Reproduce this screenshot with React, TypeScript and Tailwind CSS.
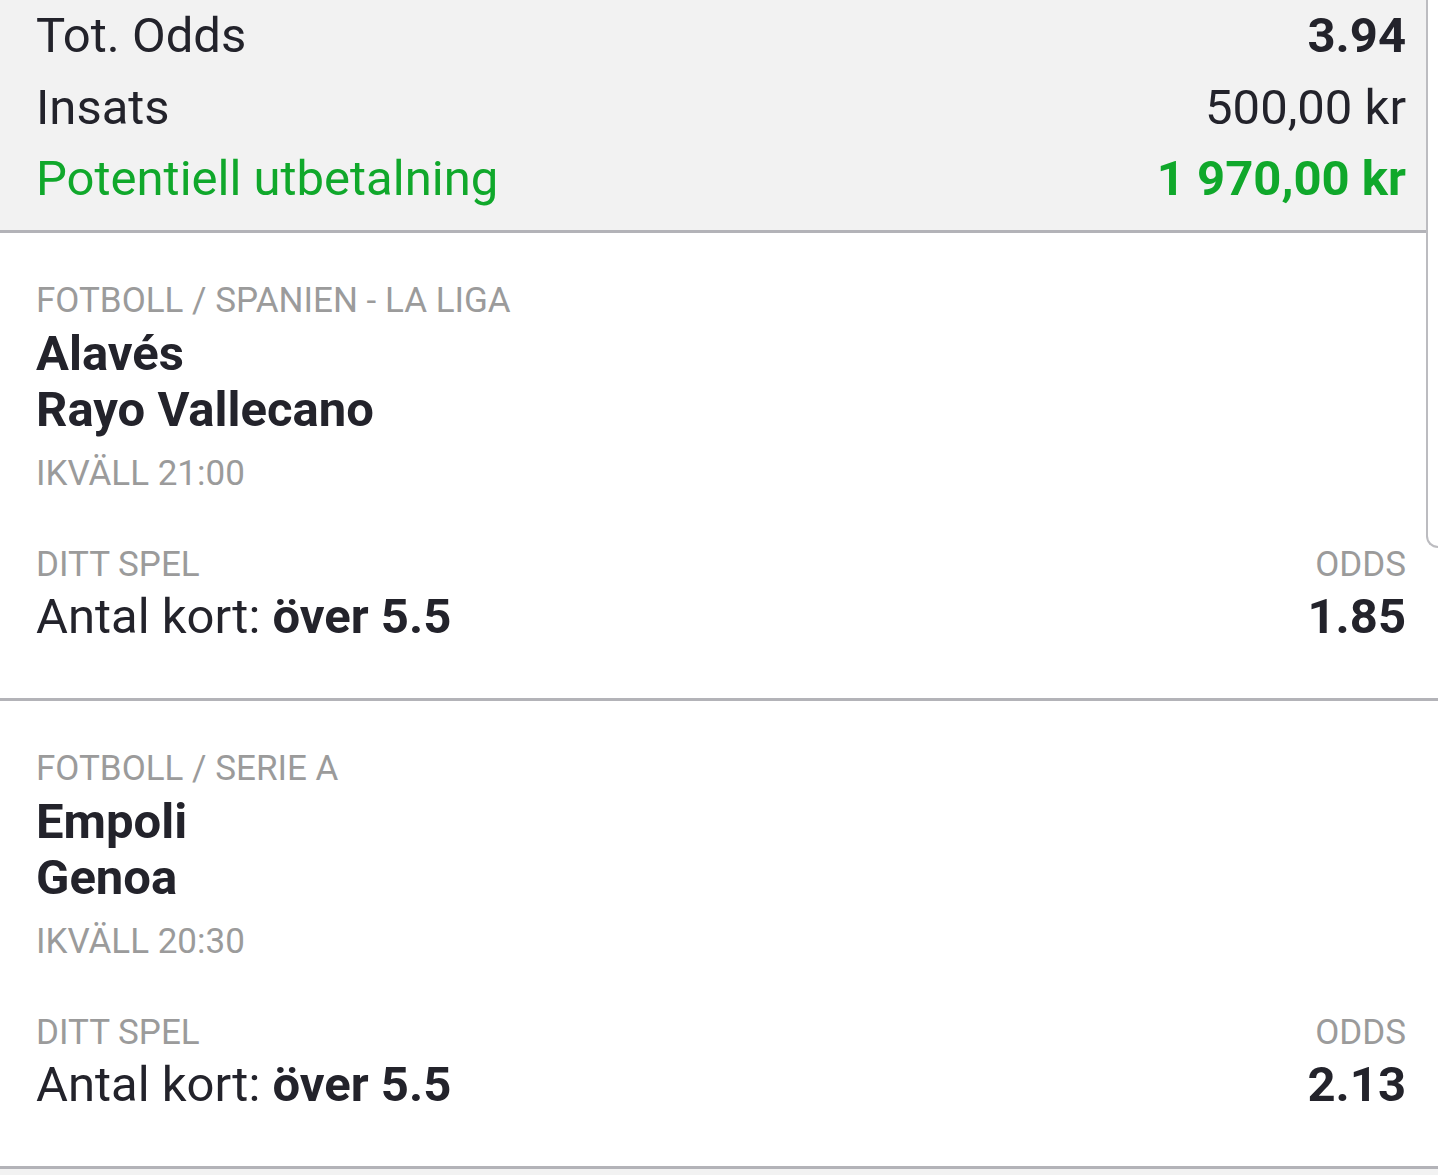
const summary = [
  { label: "Tot. Odds", value: "3.94", bold: true, green: false },
  { label: "Insats", value: "500,00 kr", bold: false, green: false },
  { label: "Potentiell utbetalning", value: "1 970,00 kr", bold: true, green: true },
];

const bets = [
  {
    league: "FOTBOLL / SPANIEN - LA LIGA",
    home: "Alavés",
    away: "Rayo Vallecano",
    time: "IKVÄLL 21:00",
    market: "Antal kort:",
    pick: "över 5.5",
    odds: "1.85",
  },
  {
    league: "FOTBOLL / SERIE A",
    home: "Empoli",
    away: "Genoa",
    time: "IKVÄLL 20:30",
    market: "Antal kort:",
    pick: "över 5.5",
    odds: "2.13",
  },
];

export default function App() {
  return (
    <div className="relative min-h-screen overflow-hidden bg-[#f2f2f2] text-[#23232b] font-['Roboto',sans-serif]">
      <div className="w-[1426px] border-b-[3px] border-[#b3b3b8] bg-[#f2f2f2] pb-[15.5px] pl-9 pr-5">
        {summary.map((row) => (
          <div
            key={row.label}
            className={`flex items-center justify-between text-[49px] leading-[71.5px] ${row.green ? "text-[#10a82b]" : ""}`}
          >
            <span>{row.label}</span>
            <span className={row.bold ? "font-bold" : ""}>{row.value}</span>
          </div>
        ))}
      </div>

      {bets.map((bet) => (
        <section key={bet.league} className="border-b-[3px] border-[#b3b3b8] bg-white pb-[53px] pl-9 pr-8 pt-[43px]">
          <p className="text-[35px] leading-[50px] text-[#9b9b9b]">{bet.league}</p>
          <p className="text-[49px] font-bold leading-[56px]">{bet.home}</p>
          <p className="text-[49px] font-bold leading-[56px]">{bet.away}</p>
          <p className="mt-[16px] text-[35px] leading-[40px] text-[#9b9b9b]">{bet.time}</p>

          <div className="mt-[51px] flex items-end justify-between">
            <div>
              <p className="text-[35px] leading-[40px] text-[#9b9b9b]">DITT SPEL</p>
              <p className="mt-[4px] text-[49px] leading-[56px]">
                {bet.market} <span className="font-bold">{bet.pick}</span>
              </p>
            </div>
            <div className="text-right">
              <p className="text-[35px] leading-[40px] text-[#9b9b9b]">ODDS</p>
              <p className="mt-[4px] text-[49px] font-bold leading-[56px]">{bet.odds}</p>
            </div>
          </div>
        </section>
      ))}

      {/* edge of the sheet behind */}
      <div className="absolute right-0 top-0 z-10 h-[548px] w-[12px] rounded-bl-[14px] border-b-2 border-l-2 border-[#bcbcc0] bg-white" />
    </div>
  );
}
